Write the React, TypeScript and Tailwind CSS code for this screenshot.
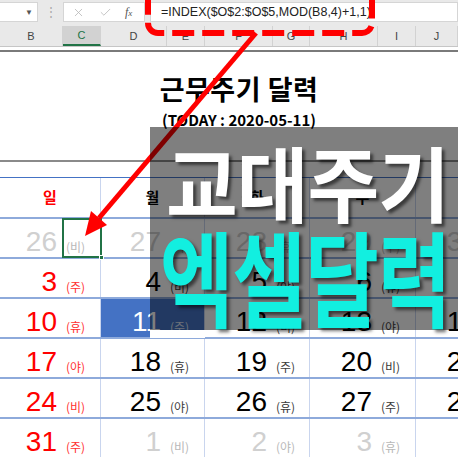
import { X, Check } from 'lucide-react'

const KR = "font-['Noto_Sans_CJK_KR',sans-serif]"
const NUM = "font-['Liberation_Sans',Arial,sans-serif]"

type Day = { n: number; s: string; cur: boolean; sun: boolean; hi: boolean }

const SHIFTS = ['비', '야', '휴', '주']

function buildWeeks(): Day[][] {
    const weeks: Day[][] = []
    let idx = 0
    for (let w = 0; w < 6; w++) {
        const row: Day[] = []
        for (let d = 0; d < 7; d++) {
            // day 0 = 2020-04-26
            let n: number
            let cur = true
            if (idx < 5) {
                n = 26 + idx
                cur = false
            } else if (idx < 36) {
                n = idx - 4
            } else {
                n = idx - 35
                cur = false
            }
            row.push({ n, s: SHIFTS[idx % 4], cur, sun: d === 0, hi: cur && n === 11 })
            idx++
        }
        weeks.push(row.slice(0, 5))
    }
    return weeks
}

// wide / narrow widths of the merged cells (visible part)
const DAY_COLS = [
    { w: 'w-[101px]', num: 'w-[63px]', lab: 'w-[38px]' },
    { w: 'w-[104px]', num: 'w-[66px]', lab: 'w-[38px]' },
    { w: 'w-[105px]', num: 'w-[68px]', lab: 'w-[37px]' },
    { w: 'w-[106px]', num: 'w-[68px]', lab: 'w-[38px]' },
    { w: 'w-[105px]', num: 'w-[68px]', lab: 'w-[37px]' },
]

const HEADERS = [
    { t: 'B', w: 'w-[63px]' },
    { t: 'C', w: 'w-[38px]', sel: true },
    { t: 'D', w: 'w-[66px]' },
    { t: 'E', w: 'w-[38px]' },
    { t: 'F', w: 'w-[68px]' },
    { t: 'G', w: 'w-[37px]' },
    { t: 'H', w: 'w-[68px]' },
    { t: 'I', w: 'w-[38px]' },
    { t: 'J', w: 'w-[42px]' },
]

const DAY_NAMES = ['일', '월', '화', '수', '목']

function DayCell({ day, col, selected }: { day: Day; col: number; selected: boolean }) {
    const c = DAY_COLS[col]
    let numColor = 'text-black'
    let labColor = 'text-[#3a3a3a]'
    if (!day.cur) {
        numColor = 'text-[#d0d0d0]'
        labColor = 'text-[#b8b8b8]'
    } else if (day.hi) {
        numColor = 'text-white'
        labColor = 'text-[#d8e0f0]'
    } else if (day.sun) {
        numColor = 'text-[#ff0000]'
        labColor = 'text-[#ff3030]'
    }
    return (
        <div className={`${c.w} shrink-0 flex border-r border-[#c9d5ee] ${day.hi ? 'bg-[#4472c4]' : ''}`}>
            <div className={`${c.num} shrink-0 flex items-end justify-end pr-[6px] pb-[1px] ${NUM} text-[28px] leading-none ${numColor}`}>
                {day.n}
            </div>
            <div
                className={`${c.lab} shrink-0 relative flex items-end pl-[3px] pb-[4px] ${KR} text-[12px] leading-none ${labColor} ${selected ? 'outline-2 outline-[#217346] -outline-offset-1' : ''}`}
            >
                ({day.s})
                {selected && <span className="absolute -right-[3px] -bottom-[3px] w-[5px] h-[5px] bg-[#217346] border border-white" />}
            </div>
        </div>
    )
}

export default function App() {
    const weeks = buildWeeks()

    return (
        <div className="relative w-[458px] h-[457px] overflow-hidden bg-white">
            {/* Formula bar */}
            <div className="h-[26px] bg-[#e9e9e9] flex items-start pt-[2px] gap-[0px]">
                <div className="w-[38px] h-[20px] bg-white border border-[#d5d5d5] border-l-0 flex items-center justify-end pr-[4px]">
                    <span className="text-[8px] text-[#555]">▼</span>
                </div>
                <div className="w-[25px] h-[20px] flex items-center justify-center text-[#a8a8a8] text-[12px] leading-none">⋮</div>
                <div className="w-[82px] h-[20px] bg-white border border-[#d5d5d5] flex items-center">
                    <X className="ml-[8px] w-[13px] h-[13px] text-[#b8b8b8]" strokeWidth={1.5} />
                    <Check className="ml-[14px] w-[13px] h-[13px] text-[#b8b8b8]" strokeWidth={1.5} />
                    <span className="ml-[13px] font-['Liberation_Serif',serif] italic text-[12px] text-[#555] leading-none">
                        f<span className="text-[9px]">x</span>
                    </span>
                </div>
                <div className="flex-1 h-[20px] bg-white border border-[#d5d5d5] ml-[5px] flex items-center pl-[10px]">
                    <span className={`${NUM} text-[12.5px] text-[#222] whitespace-nowrap`}>=INDEX($O$2:$O$5,MOD(B8,4)+1,1)</span>
                </div>
            </div>

            {/* Column headers */}
            <div className="h-[21px] bg-[#e9e9e9] flex border-b border-[#c6c6c6]">
                {HEADERS.map((h) => (
                    <div
                        key={h.t}
                        className={`${h.w} shrink-0 flex items-center justify-center border-r border-[#d2d2d2] ${NUM} text-[11px] ${
                            h.sel ? 'bg-[#d2d2d2] text-[#217346] border-b-2 border-b-[#217346]' : 'text-[#444]'
                        }`}
                    >
                        {h.t}
                    </div>
                ))}
            </div>

            {/* Sheet */}
            <div className="h-[3px]" />
            <div className="border-t-2 border-[#7a7a7a] h-[110px] flex flex-col items-center pl-[20px]">
                <div className={`${KR} font-bold text-[27px] leading-none text-black mt-[23px] tracking-[0.5px]`}>근무주기 달력</div>
                <div className={`${KR} font-bold text-[15px] leading-none text-black mt-[10px]`}>(TODAY : 2020-05-11)</div>
            </div>
            <div className="border-t-2 border-[#8a8a8a] h-[17px]" />

            {/* Calendar */}
            <div className="border-t border-[#4472c4]">
                <div className="h-[41px] flex border-b-2 border-[#8eaadb]">
                    {DAY_NAMES.map((d, i) => (
                        <div
                            key={d}
                            className={`${DAY_COLS[i].w} shrink-0 flex items-center justify-center border-r border-[#c9d5ee] ${KR} font-bold text-[15px] ${
                                i === 0 ? 'text-[#ff0000]' : 'text-black'
                            }`}
                        >
                            {d}
                        </div>
                    ))}
                </div>
                {weeks.map((wk, wi) => (
                    <div key={wi} className="h-[40px] flex border-b-2 border-[#8eaadb]">
                        {wk.map((day, di) => (
                            <DayCell key={di} day={day} col={di} selected={wi === 0 && di === 0} />
                        ))}
                    </div>
                ))}
            </div>

            {/* Annotation drawing */}
            <svg className="absolute inset-0 pointer-events-none" width="458" height="457" viewBox="0 0 458 457">
                <rect x="148" y="-30" width="224" height="63" rx="10" fill="none" stroke="#ff0000" strokeWidth="6" strokeDasharray="22 8" strokeDashoffset="4" />
                <line x1="256" y1="33" x2="99" y2="218" stroke="#ff0000" strokeWidth="5" />
                <polygon points="85,236 107,225 91,211" fill="#ff0000" />
            </svg>

            {/* Thumbnail overlay */}
            <div className="absolute left-[150px] top-[127px] w-[308px] h-[203px] bg-black/50">
                <div className="absolute left-0 -bottom-[8px] w-[55px] h-[8px] bg-white" />
                <div className="flex flex-col pl-[16px] pt-[11px]">
                    <div className={`${KR} font-bold text-[78px] leading-[80px] text-white tracking-[-1px] whitespace-nowrap origin-top scale-y-105 [text-shadow:3px_3px_3px_rgba(0,0,0,0.55)]`}>
                        교대주기
                    </div>
                    <div className={`${KR} font-bold text-[80px] leading-[80px] text-[#12efe0] tracking-[-1px] whitespace-nowrap origin-top scale-y-130 mt-[4px] -ml-[6px] [text-shadow:3px_3px_3px_rgba(0,0,0,0.55)]`}>
                        엑셀달력
                    </div>
                </div>
            </div>
        </div>
    )
}
